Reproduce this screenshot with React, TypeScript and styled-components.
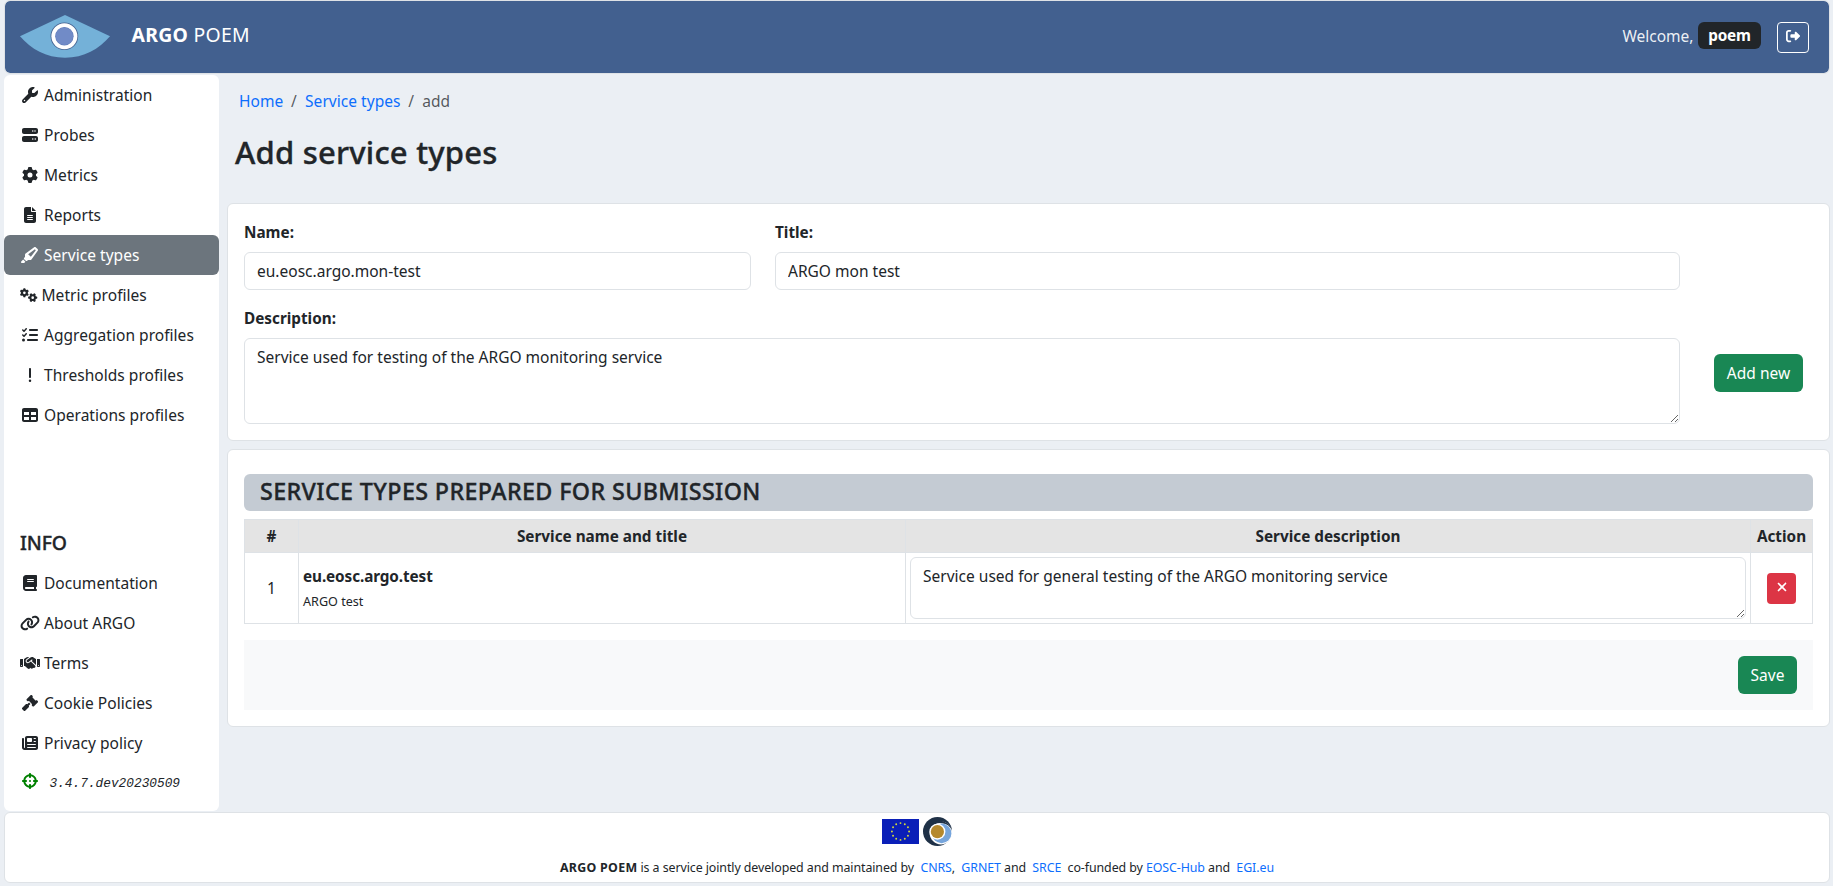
import React from 'react';
import styled, { createGlobalStyle } from 'styled-components';
import type { IconType } from 'react-icons';
import {
  FaBook,
  FaCrosshairs,
  FaExclamation,
  FaFileLines,
  FaGavel,
  FaGear,
  FaGears,
  FaHandshake,
  FaHighlighter,
  FaLink,
  FaListCheck,
  FaNewspaper,
  FaRightFromBracket,
  FaServer,
  FaTable,
  FaWrench,
  FaXmark,
} from 'react-icons/fa6';

const colors = {
  page: '#ebeff4',
  text: '#212529',
  muted: 'rgba(33, 37, 41, 0.75)',
  border: '#dee2e6',
  brand: '#42608f',
  link: '#0d6efd',
  success: '#198754',
  danger: '#dc3545',
  active: '#6c757d',
};

const GlobalStyle = createGlobalStyle`
  *, *::before, *::after { box-sizing: border-box; }
  body {
    margin: 0;
    background: ${colors.page};
    color: ${colors.text};
    font-family: 'Noto Sans', 'Open Sans', sans-serif;
    font-size: 15.52px;
    line-height: 24px;
  }
  h1, h2, h3, p { margin: 0; }
  h1, h2, h3 { font-weight: 500; -webkit-text-stroke: 0.35px currentColor; }
  a { color: ${colors.link}; text-decoration: none; }
  button, input, textarea { font: inherit; color: inherit; }
`;

const Page = styled.div`
  display: flex;
  flex-direction: column;
  width: 100%;
  height: 886px;
  padding: 0 3px 0 4px;
`;

const Panel = styled.section`
  background: #fff;
  border: 1px solid ${colors.border};
  border-radius: 6px;
`;

/* Top bar */

const TopBar = styled.header`
  display: flex;
  align-items: center;
  height: 74px;
  padding: 0 20px 0 15px;
  background: ${colors.brand};
  background-clip: padding-box;
  border: 1px solid ${colors.border};
  border-radius: 6px;
  color: #fff;
`;

const Brand = styled.div`
  flex: 1;
  padding: 0 0 4px 21.5px;
  font-size: 19.4px;
  letter-spacing: 0.28px;
`;

const Welcome = styled.span`
  margin-right: 4.5px;
  padding-bottom: 2px;
  color: rgba(255, 255, 255, 0.92);
`;

const UserBadge = styled.span`
  width: 63px;
  height: 27px;
  margin: 0 16px 3px 0;
  border-radius: 6px;
  background: ${colors.text};
  font-weight: 700;
  font-size: 15.3px;
  line-height: 26px;
  letter-spacing: -0.2px;
  text-align: center;
`;

const LogoutButton = styled.button`
  display: flex;
  justify-content: center;
  width: 32px;
  height: 31px;
  margin-top: 1px;
  padding: 6px 0 0;
  border: 1px solid #fff;
  border-radius: 4px;
  background: transparent;
  color: #fff;
  font-size: 14px;
`;

/* Side navigation */

const Body = styled.div`
  display: flex;
  gap: 8px;
  height: 737px;
  margin-bottom: 1px;
  padding-top: 1px;
`;

const Sidebar = styled.nav`
  display: flex;
  flex-direction: column;
  justify-content: space-between;
  width: 215px;
  padding-bottom: 8px;
  border-radius: 6px;
  background: #fff;
`;

const NavList = styled.div`
  display: flex;
  flex-direction: column;
`;

const NavItem = styled.a<{ $active?: boolean; $compact?: boolean }>`
  display: flex;
  align-items: center;
  gap: 4px;
  height: 40px;
  padding: 0 16px;
  border-radius: 6px;
  background: ${(p) => (p.$active ? colors.active : 'transparent')};
  color: ${(p) => (p.$active ? '#fff' : colors.text)};
  letter-spacing: 0.03px;
  white-space: nowrap;

  svg {
    width: ${(p) => (p.$compact ? '17.5px' : '20px')};
    height: ${(p) => (p.$compact ? '14px' : '16px')};
    flex: none;
  }
`;

const NavHeading = styled.h3`
  height: 40px;
  padding: 0 16px;
  font-size: 19.4px;
  line-height: 39px;
  letter-spacing: -0.1px;
`;

const Version = styled.div`
  display: flex;
  align-items: center;
  gap: 9.5px;
  height: 40px;
  padding: 0 16px 4px;
  font-family: 'Liberation Mono', monospace;
  font-size: 12.8px;
  font-style: italic;

  svg {
    width: 20px;
    height: 16px;
    color: #008000;
  }

  span {
    padding-top: 5px;
  }
`;

/* Main column */

const Main = styled.main`
  flex: 1;
  min-width: 0;
`;

const Breadcrumb = styled.ol`
  display: flex;
  gap: 7.7px;
  margin: 0;
  padding: 14px 0 0 12px;
  color: ${colors.muted};
  letter-spacing: 0.03px;
  list-style: none;

  li + li::before {
    content: '/';
    padding-right: 8.3px;
  }
`;

const PageTitle = styled.h1`
  height: 90px;
  padding: 19px 0 0 8px;
  font-size: 31.04px;
  line-height: 40px;
  letter-spacing: 0.2px;
`;

const FormPanel = styled(Panel)`
  display: flex;
  align-items: flex-end;
  gap: 34px;
  height: 238px;
  padding: 16px;
`;

const Fields = styled.div`
  display: grid;
  grid-template-columns: 507px 1fr;
  gap: 16px 24px;
  width: 1436px;
`;

const Field = styled.label<{ $wide?: boolean }>`
  display: flex;
  flex-direction: column;
  gap: 8px;
  grid-column: ${(p) => (p.$wide ? '1 / -1' : 'auto')};
`;

const FieldName = styled.span`
  font-size: 15.3px;
  font-weight: 700;
`;

const Input = styled.input`
  width: 100%;
  height: 38px;
  padding: 6px 12px;
  border: 1px solid ${colors.border};
  border-radius: 6px;
  background: #fff;
  outline: none;
`;

const TextArea = styled.textarea<{ $height: number }>`
  display: block;
  width: 100%;
  height: ${(p) => p.$height}px;
  padding: 6px 12px;
  border: 1px solid ${colors.border};
  border-radius: 6px;
  background: #fff;
  outline: none;
  resize: vertical;
`;

const Button = styled.button<{ $width: number }>`
  width: ${(p) => p.$width}px;
  height: 38px;
  padding: 0;
  border: 0;
  border-radius: 6px;
  background: ${colors.success};
  color: #fff;
`;

const AddButton = styled(Button)`
  margin-bottom: 32px;
`;

const ListPanel = styled(Panel)`
  margin-top: 8px;
  padding: 24px 16px 16px;
`;

const ListTitle = styled.h2`
  height: 37px;
  margin-bottom: 8px;
  padding-left: 16px;
  border-radius: 6px;
  background: #c4cbd3;
  font-size: 23.3px;
  line-height: 34px;
  letter-spacing: 0.37px;
`;

const Table = styled.table`
  width: 100%;
  table-layout: fixed;
  border-collapse: collapse;
`;

const HeadCell = styled.th<{ $width?: number }>`
  width: ${(p) => (p.$width ? `${p.$width}px` : 'auto')};
  height: 33px;
  padding: 0;
  border: 1px solid ${colors.border};
  background: #e4e4e4;
  font-size: 15.3px;
  font-weight: 700;
`;

const Cell = styled.td<{ $center?: boolean }>`
  height: 71px;
  padding: 0 4px;
  border: 1px solid ${colors.border};
  text-align: ${(p) => (p.$center ? 'center' : 'left')};
  vertical-align: middle;
`;

const ServiceName = styled.div`
  padding-top: 2px;
  font-size: 15.3px;
  font-weight: 700;
  letter-spacing: -0.1px;
`;

const ServiceTitle = styled.div`
  padding-top: 1px;
  font-size: 12.6px;
  line-height: 26px;
`;

const RemoveButton = styled.button`
  display: inline-flex;
  justify-content: center;
  width: 29px;
  height: 31px;
  padding: 7px 0 0;
  border: 0;
  border-radius: 4px;
  background: ${colors.danger};
  color: #fff;
  font-size: 14px;
  vertical-align: middle;
`;

const Actions = styled.div`
  display: flex;
  align-items: center;
  justify-content: flex-end;
  height: 70px;
  margin-top: 16px;
  padding-right: 16px;
  background: #f8f9fa;
`;

/* Footer */

const Footer = styled.footer`
  display: flex;
  flex-direction: column;
  align-items: center;
  height: 71px;
  padding-top: 4px;
  background: #fff;
  border: 1px solid ${colors.border};
  border-radius: 6px;
`;

const Sponsors = styled.div`
  display: flex;
  align-items: center;
  gap: 4px;
  height: 29px;
`;

const Credits = styled.p`
  margin-top: 12px;
  font-size: 12.4px;
  line-height: 20px;
  letter-spacing: -0.08px;
  white-space: pre;

  strong {
    letter-spacing: 0.28px;
  }
`;

const LogoSlot = styled.div`
  height: 43px;
  margin-bottom: 2px;
`;

const EyeLogo = () => (
  <LogoSlot>
    <svg width="90" height="43" viewBox="0 0 90 43">
      <path d="M0 21.2 45 0l45 21.2C79 34 64 42.7 45 42.7S11 34 0 21.2Z" fill="#74b1d8" />
      <circle cx="44.4" cy="21.2" r="13.8" fill={colors.brand} />
      <circle cx="44.4" cy="21.2" r="13" fill="#fff" />
      <circle cx="44.4" cy="21.2" r="9.2" fill="#5f7cb8" />
      <circle cx="44.4" cy="21.2" r="8.7" fill="#718bc7" />
    </svg>
  </LogoSlot>
);

const STAR_ANGLES = Array.from({ length: 12 }, (_, i) => (i * Math.PI) / 6);

const EuFlag = () => (
  <svg width="37" height="25" viewBox="0 0 37 25">
    <rect width="37" height="25" fill="#0a1fb8" />
    {STAR_ANGLES.map((a) => (
      <circle key={a} cx={18.5 + 8.6 * Math.sin(a)} cy={12.5 - 8.4 * Math.cos(a)} r="0.95" fill="#d5dc3c" />
    ))}
  </svg>
);

const EoscLogo = () => (
  <svg width="29" height="29" viewBox="0 0 29 29">
    <circle cx="14.5" cy="14.5" r="14.5" fill="#1f3147" />
    <circle cx="18" cy="16" r="11.4" fill="#fff" />
    <path d="M9 7.5A11.6 11.6 0 0 1 28.9 15 10 10 0 0 0 19 6.2 10.5 10.5 0 0 0 9 10Z" fill="#1f3147" />
    <circle cx="18.6" cy="16.4" r="9.8" fill="#76a5dc" />
    <circle cx="14.4" cy="14.7" r="8" fill="#fff" />
    <circle cx="14.4" cy="14.7" r="6.6" fill="#b5892e" />
  </svg>
);

interface NavEntry {
  label: string;
  icon: IconType;
  active?: boolean;
  compact?: boolean;
}

const mainNav: NavEntry[] = [
  { label: 'Administration', icon: FaWrench },
  { label: 'Probes', icon: FaServer },
  { label: 'Metrics', icon: FaGear },
  { label: 'Reports', icon: FaFileLines },
  { label: 'Service types', icon: FaHighlighter, active: true },
  { label: 'Metric profiles', icon: FaGears, compact: true },
  { label: 'Aggregation profiles', icon: FaListCheck },
  { label: 'Thresholds profiles', icon: FaExclamation },
  { label: 'Operations profiles', icon: FaTable },
];

const infoNav: NavEntry[] = [
  { label: 'Documentation', icon: FaBook },
  { label: 'About ARGO', icon: FaLink },
  { label: 'Terms', icon: FaHandshake },
  { label: 'Cookie Policies', icon: FaGavel },
  { label: 'Privacy policy', icon: FaNewspaper },
];

const NavEntries = ({ entries }: { entries: NavEntry[] }) => (
  <>
    {entries.map(({ label, icon: Icon, active, compact }) => (
      <NavItem key={label} $active={active} $compact={compact}>
        <Icon />
        <span>{label}</span>
      </NavItem>
    ))}
  </>
);

export default function App() {
  return (
    <Page>
      <GlobalStyle />
      <TopBar>
        <EyeLogo />
        <Brand>
          <strong>ARGO</strong> POEM
        </Brand>
        <Welcome>Welcome,</Welcome>
        <UserBadge>poem</UserBadge>
        <LogoutButton aria-label="Log out">
          <FaRightFromBracket />
        </LogoutButton>
      </TopBar>

      <Body>
        <Sidebar>
          <NavList>
            <NavEntries entries={mainNav} />
          </NavList>
          <NavList>
            <NavHeading>INFO</NavHeading>
            <NavEntries entries={infoNav} />
            <Version>
              <FaCrosshairs />
              <span>3.4.7.dev20230509</span>
            </Version>
          </NavList>
        </Sidebar>

        <Main>
          <Breadcrumb>
            <li>
              <a>Home</a>
            </li>
            <li>
              <a>Service types</a>
            </li>
            <li>add</li>
          </Breadcrumb>
          <PageTitle>Add service types</PageTitle>

          <FormPanel>
            <Fields>
              <Field>
                <FieldName>Name:</FieldName>
                <Input defaultValue="eu.eosc.argo.mon-test" />
              </Field>
              <Field>
                <FieldName>Title:</FieldName>
                <Input defaultValue="ARGO mon test" />
              </Field>
              <Field $wide>
                <FieldName>Description:</FieldName>
                <TextArea $height={86} defaultValue="Service used for testing of the ARGO monitoring service" />
              </Field>
            </Fields>
            <AddButton $width={89}>Add new</AddButton>
          </FormPanel>

          <ListPanel>
            <ListTitle>SERVICE TYPES PREPARED FOR SUBMISSION</ListTitle>
            <Table>
              <thead>
                <tr>
                  <HeadCell $width={54}>#</HeadCell>
                  <HeadCell $width={607}>Service name and title</HeadCell>
                  <HeadCell>Service description</HeadCell>
                  <HeadCell $width={62}>Action</HeadCell>
                </tr>
              </thead>
              <tbody>
                <tr>
                  <Cell $center>1</Cell>
                  <Cell>
                    <ServiceName>eu.eosc.argo.test</ServiceName>
                    <ServiceTitle>ARGO test</ServiceTitle>
                  </Cell>
                  <Cell>
                    <TextArea
                      $height={62}
                      defaultValue="Service used for general testing of the ARGO monitoring service"
                    />
                  </Cell>
                  <Cell $center>
                    <RemoveButton aria-label="Remove">
                      <FaXmark />
                    </RemoveButton>
                  </Cell>
                </tr>
              </tbody>
            </Table>
            <Actions>
              <Button $width={59}>Save</Button>
            </Actions>
          </ListPanel>
        </Main>
      </Body>

      <Footer>
        <Sponsors>
          <EuFlag />
          <EoscLogo />
        </Sponsors>
        <Credits>
          <strong>ARGO POEM</strong> is a service jointly developed and maintained by {' '}
          <a>CNRS</a>, {' '}
          <a>GRNET</a> and {' '}
          <a>SRCE</a> {' '}
          co-funded by <a>EOSC-Hub</a> and {' '}
          <a>EGI.eu</a>
        </Credits>
      </Footer>
    </Page>
  );
}
